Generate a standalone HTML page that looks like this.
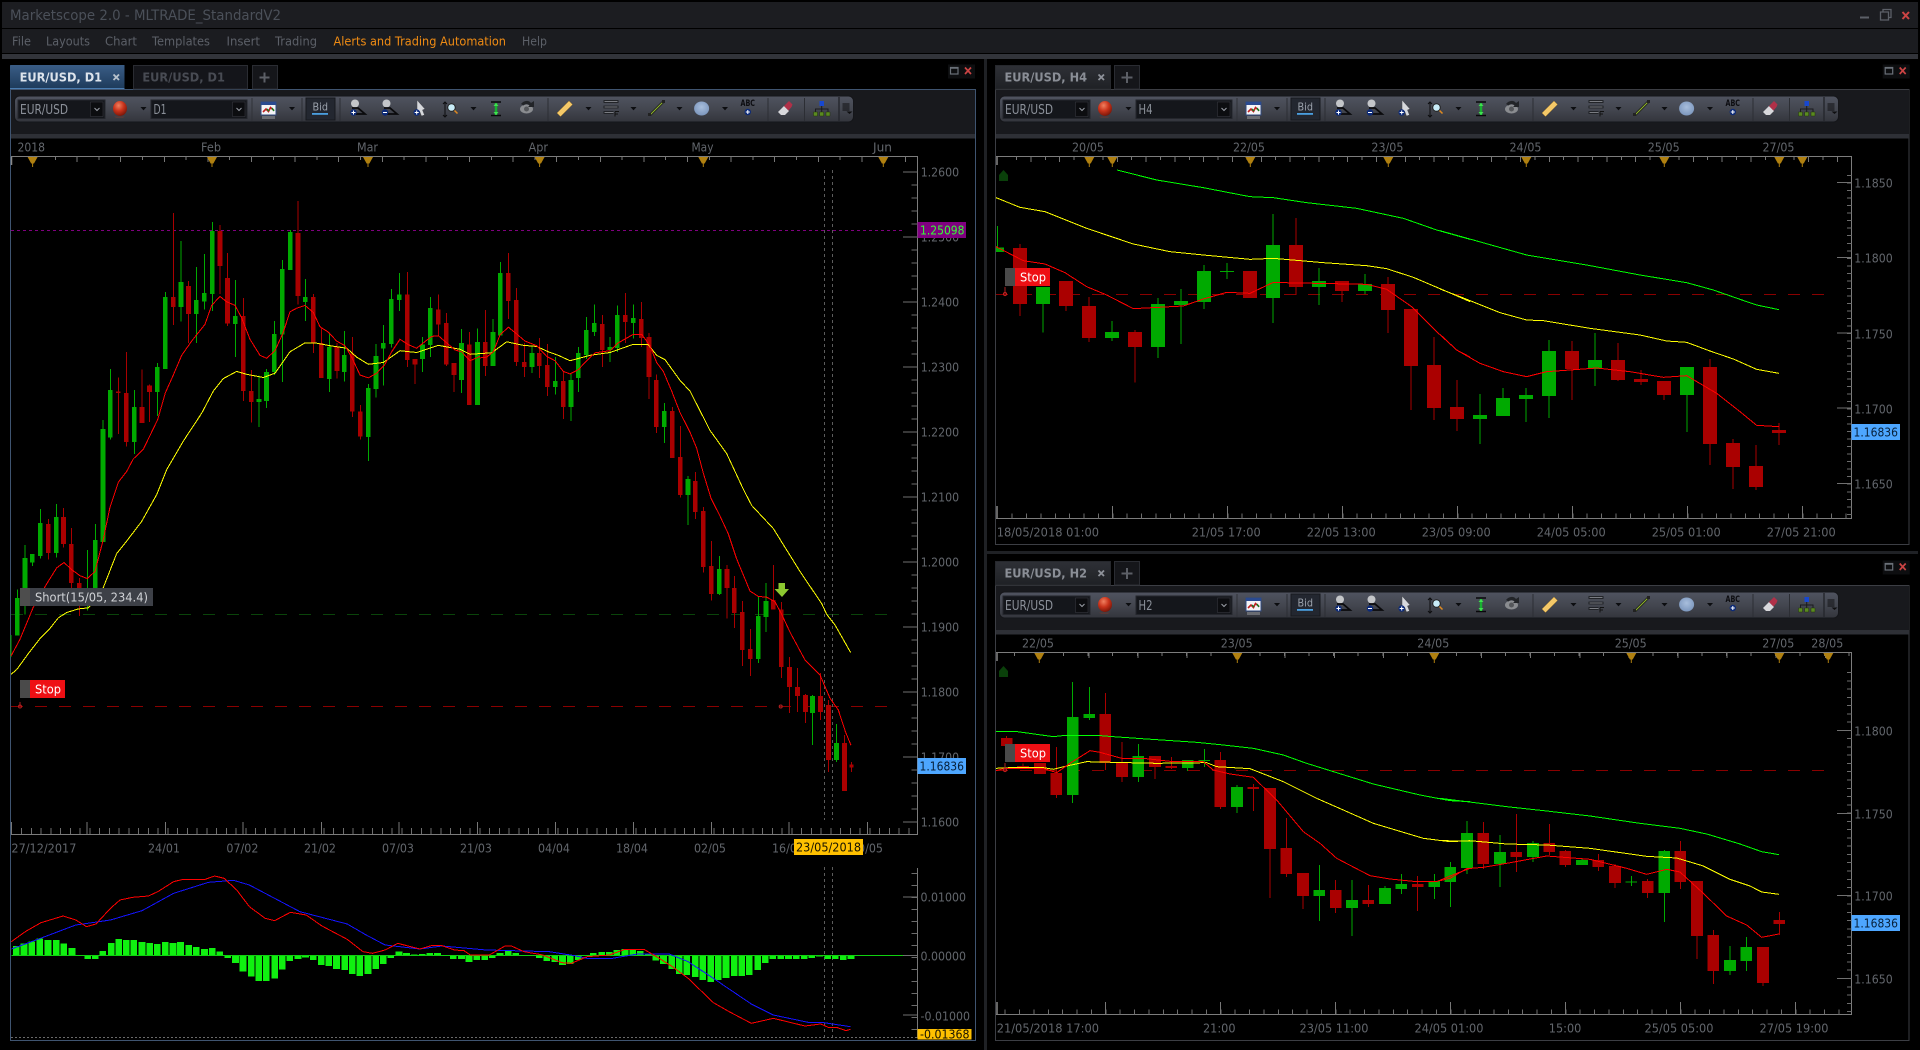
<!DOCTYPE html>
<html><head><meta charset="utf-8"><title>Marketscope 2.0</title>
<style>
html,body{margin:0;padding:0;background:#000;width:1920px;height:1050px;overflow:hidden}
svg{display:block}
text{font-family:"DejaVu Sans","Liberation Sans",sans-serif;font-size:12px;fill:#666a70}
.m{font-size:12px;fill:#5c6068}
.tb{font-size:13.5px;fill:#8b9099}
.ax{fill:#62666c}
.c{shape-rendering:crispEdges;fill:none}
.l{fill:none;vector-effect:non-scaling-stroke;stroke-width:1;shape-rendering:crispEdges}
</style></head><body>
<svg width="1920" height="1050" viewBox="0 0 1920 1050" xmlns="http://www.w3.org/2000/svg">
<defs>
<linearGradient id="tg" x1="0" y1="0" x2="0" y2="1"><stop offset="0" stop-color="#505460"/><stop offset=".55" stop-color="#42454e"/><stop offset="1" stop-color="#33353c"/></linearGradient>
<linearGradient id="ta" x1="0" y1="0" x2="0" y2="1"><stop offset="0" stop-color="#3a5d86"/><stop offset="1" stop-color="#1d3a5a"/></linearGradient>
<linearGradient id="ti" x1="0" y1="0" x2="0" y2="1"><stop offset="0" stop-color="#2e3036"/><stop offset="1" stop-color="#1f2125"/></linearGradient>
<radialGradient id="ball" cx=".4" cy=".3" r=".75"><stop offset="0" stop-color="#f08060"/><stop offset=".5" stop-color="#c8321a"/><stop offset="1" stop-color="#701408"/></radialGradient>
<radialGradient id="ell" cx=".5" cy=".4" r=".7"><stop offset="0" stop-color="#a8bedc"/><stop offset="1" stop-color="#7590b8"/></radialGradient>
<g id="pl"><circle r="3.2" fill="#0c2a78"/><path d="M-2 0H2M0-2V2" stroke="#fff" stroke-width="1"/></g>
<g id="tbar">
<rect x="14.5" y="96" width="839" height="26" rx="5" fill="url(#tg)" stroke="#15161a"/>
<rect x="18" y="100" width="87" height="18.5" fill="#14161b" stroke="#24262c"/>
<rect x="90.5" y="102" width="12.5" height="14.5" fill="#0c0d10" stroke="#3a3c44" stroke-width=".5"/>
<path d="M94.5 108l2.5 2.5 2.5-2.5" stroke="#9a9ea6" fill="none"/>
<ellipse cx="120" cy="108.500" rx="7" ry="7.500" fill="url(#ball)"/>
<path d="M114 116.500h11l-2 1.500h-7z" fill="#6a3a34" opacity=".6"/>
<path d="M140.5 107h6l-3 3.4z" fill="#0c0d10"/>
<rect x="151" y="100" width="96" height="18.5" fill="#14161b" stroke="#24262c"/>
<rect x="232.5" y="102" width="12.5" height="14.5" fill="#0c0d10" stroke="#3a3c44" stroke-width=".5"/>
<path d="M236.5 108l2.5 2.5 2.5-2.5" stroke="#9a9ea6" fill="none"/>
<path d="M252 98v23" stroke="#303238"/>
<rect x="261" y="102" width="15" height="13" fill="#f4f4f6" stroke="#304a80"/>
<rect x="261" y="102" width="15" height="3" fill="#2a4a90"/>
<path d="M263 112l3-3 2.5 2.5 2-4 3.5 3" stroke="#c02020" stroke-width="1.6" fill="none"/>
<path d="M267 109l2 2M272 108l2 3" stroke="#108020" stroke-width="1.4"/>
<rect x="262" y="116" width="13" height="3" fill="#6a6c72"/>
<path d="M289 107h6l-3 3.4z" fill="#0c0d10"/>
<path d="M302 98v23" stroke="#2c2e34"/>
<rect x="306" y="98" width="29" height="22" fill="#232730" stroke="#17191e"/>
<rect x="312" y="113" width="16" height="1.8" fill="#4a9fe0"/>
<path d="M340 98v23" stroke="#2c2e34"/>
<circle cx="355" cy="103.5" r="4" fill="#c4c6c9"/><path d="M352 108h6l7 6H355" stroke="#0a0a0c" stroke-width="1.8" fill="none"/><use href="#pl" x="353.5" y="112.5"/>
<circle cx="386.5" cy="103.5" r="4" fill="#c4c6c9"/><path d="M384 108h6l7 6H387" stroke="#0a0a0c" stroke-width="1.8" fill="none"/>
<circle cx="385" cy="112.5" r="3.2" fill="#0c2a78"/><path d="M383 112.5h4" stroke="#fff"/>
<path d="M417 100l8 9-2.500 1 2 5-3 1-2-5-2.500 2z" fill="#d6d8dc" stroke="#44464c" stroke-width=".5"/><use href="#pl" x="416.700" y="112.500"/>
<path d="M445 102v15M443 104l2-2 2 2M443 115l2 2 2-2" stroke="#0c0c0e" fill="none"/>
<circle cx="451.500" cy="107.500" r="3.800" fill="#c8ecf8" stroke="#222"/><path d="M454.500 110.500l3 3" stroke="#e08a20" stroke-width="1.500"/>
<path d="M470.500 107h6l-3 3.400z" fill="#0c0d10"/>
<path d="M491 102h10M491 115.500h10" stroke="#08080a" stroke-width="1.400"/><path d="M496 103v12" stroke="#18b030" stroke-width="2.500"/><path d="M493.500 106l2.500-3 2.500 3z M493.500 112l2.500 3 2.500-3z" fill="#40e050"/>
<ellipse cx="526.500" cy="109" rx="6.500" ry="4.500" fill="#8a8c90"/><circle cx="526.500" cy="109" r="2.500" fill="#55575b"/><path d="M521 104c3-4 8-4 10-1l3-2v6h-6l1.500-1.500c-2-2-4-2-6 0z" fill="#222428"/>
<path d="M548 98v23" stroke="#2c2e34"/>
<path d="M557 113l12-12 3.500 3.500-12 12z" fill="#f4c868" stroke="#a88030" stroke-width=".5"/>
<path d="M585.500 107h6l-3 3.400z" fill="#0c0d10"/>
<path d="M603.500 101.500h15M603.500 107h15M603.500 112.500h10" stroke="#1c1e22" stroke-width="2.800"/><path d="M604.500 101.500h13M604.500 107h13M604.500 112.500h9" stroke="#7a7c82" stroke-width="1"/><path d="M615 111.500h4M615 111.500v5M615 114h3" stroke="#111" fill="none"/>
<path d="M630.500 107h6l-3 3.400z" fill="#0c0d10"/>
<path d="M650 115l13-13" stroke="#111" stroke-width="2.600"/><path d="M650 115l13-13" stroke="#8cb030" stroke-width="1.200"/><path d="M648 113h3v3h-3zM662 100h3v3h-3z" fill="#222"/>
<path d="M676.500 107h6l-3 3.400z" fill="#0c0d10"/>
<ellipse cx="701.600" cy="108.500" rx="7.500" ry="7" fill="url(#ell)"/>
<path d="M722 107h6l-3 3.400z" fill="#0c0d10"/>
<use href="#pl" x="747.800" y="112"/>
<path d="M768 98v23" stroke="#2c2e34"/>
<path d="M778 112l6-6 5 5-4 4h-4z" fill="#d8d8dc"/><path d="M784 106l5-5 3.500 3.500-1 2.500-3 3.500z" fill="#b03048"/>
<path d="M804.500 98v23" stroke="#2c2e34"/>
<rect x="819.500" y="101" width="4.500" height="5" fill="#1848d0"/><path d="M821.700 106v3M815.500 112v-3h12.500v3M821.700 109v3" stroke="#1a1a1e" fill="none"/><path d="M813.500 112h4v4h-4zM819.700 112h4v4h-4zM826 112h4v4h-4z" fill="#5a8a20" stroke="#22340c" stroke-width=".5"/>
<path d="M839 97v24" stroke="#26282e" stroke-width="1.500"/>
<path d="M842.500 104h7M842.500 106h7M842.500 108h7M842.500 110h7" stroke="#0e0e10"/><path d="M846.500 111.500h6l-3 2.500z" fill="#0e0e10"/>
</g>
<g id="mk"><path d="M-5 1h10l-3.600 6.500-.9 0V11h-1V7.500h-.9z" fill="#b08010"/></g>
<g id="wc"><rect x="-6" y="-6.500" width="27" height="14" fill="#0d0e10"/><rect x="-3.500" y="-3.500" width="7.500" height="6.500" fill="none" stroke="#6a7078" stroke-width="1.200"/><path d="M-3.500-3h7.500" stroke="#6a7078" stroke-width="1.500"/><path d="M11-3.500l6 6.500m0-6.500l-6 6.500" stroke="#cc4444" stroke-width="1.700"/></g>
<g id="stopb"><rect width="10" height="18" fill="#4a4a4a"/><rect x="10" width="35" height="18" fill="#ee0f14"/></g>
</defs>

<rect width="1920" height="1050" fill="#000"/>
<!-- title + menu -->
<rect x="2" y="2" width="1916" height="26" fill="#1c1d21"/>
<rect x="2" y="29" width="1916" height="24" fill="#1b1c20"/>
<rect x="2" y="54" width="1916" height="5" fill="#32343a"/>
<text x="10" y="20" style="font-size:14px;fill:#4b5059" textLength="271" lengthAdjust="spacingAndGlyphs">Marketscope 2.0 - MLTRADE_StandardV2</text>
<text class="m" x="12" y="45.500" textLength="19" lengthAdjust="spacingAndGlyphs">File</text>
<text class="m" x="46" y="45.500" textLength="44" lengthAdjust="spacingAndGlyphs">Layouts</text>
<text class="m" x="105" y="45.500" textLength="32" lengthAdjust="spacingAndGlyphs">Chart</text>
<text class="m" x="152" y="45.500" textLength="58" lengthAdjust="spacingAndGlyphs">Templates</text>
<text class="m" x="226.500" y="45.500" textLength="33.500" lengthAdjust="spacingAndGlyphs">Insert</text>
<text class="m" x="275" y="45.500" textLength="42" lengthAdjust="spacingAndGlyphs">Trading</text>
<text x="333.500" y="45.500" style="fill:#f08c14" textLength="172.500" lengthAdjust="spacingAndGlyphs">Alerts and Trading Automation</text>
<text class="m" x="522" y="45.500" textLength="25" lengthAdjust="spacingAndGlyphs">Help</text>
<path d="M1860 17.500h9" stroke="#5c6068" stroke-width="2"/>
<path d="M1880.500 12h8v8h-8zM1883 12V9.500h8v8h-2.500" stroke="#5c6068" stroke-width="1.300" fill="none"/>
<path d="M1902.500 12l6.500 7m0-7l-6.500 7" stroke="#cc4444" stroke-width="2"/>

<!-- splitters -->
<rect x="984" y="59" width="3" height="991" fill="#1f2125"/>
<rect x="987" y="551" width="931" height="3" fill="#1f2125"/>

<!-- LEFT PANEL -->
<rect x="10.500" y="89.500" width="965" height="951" fill="#000" stroke="#3f5470"/>
<rect x="11" y="90" width="964" height="44" fill="#18191d"/>
<rect x="11" y="134" width="964" height="4.500" fill="#2e3036"/>
<path d="M10 89V65.500q0-.5 1-.5H124.500V89z" fill="url(#ta)"/>
<path d="M10 88.500H124.500" stroke="#4a7cb0"/>
<text x="19.600" y="81.500" style="font-weight:bold;font-size:12px;fill:#dde4ec" textLength="82.500" lengthAdjust="spacingAndGlyphs">EUR/USD, D1</text>
<path d="M113.500 74.500l5.500 5.500m0-5.500l-5.500 5.500" stroke="#b8c2cc" stroke-width="1.800"/>
<rect x="133.500" y="65.500" width="114" height="23.500" fill="#14151a" stroke="#2a2c32"/>
<text x="142.400" y="81.500" style="font-weight:bold;font-size:12px;fill:#484b53" textLength="82.500" lengthAdjust="spacingAndGlyphs">EUR/USD, D1</text>
<rect x="252.500" y="65.500" width="25" height="23.500" fill="#15161a" stroke="#2a2c32"/>
<path d="M259.500 77.500h10M264.500 72.500v10" stroke="#5c5f66" stroke-width="2"/>
<use href="#wc" x="954" y="71"/>

<use href="#tbar"/>
<text class="tb" x="20" y="114" textLength="48" lengthAdjust="spacingAndGlyphs">EUR/USD</text>
<text class="tb" x="153.500" y="114" textLength="13" lengthAdjust="spacingAndGlyphs">D1</text>
<text x="312.500" y="110.500" style="font-size:11px;fill:#9ba2ac" textLength="15.500" lengthAdjust="spacingAndGlyphs">Bid</text>
<text x="740.500" y="106" style="font-size:8.500px;fill:#0c0c10;font-weight:bold" textLength="14.500" lengthAdjust="spacingAndGlyphs">ABC</text>

<!-- left top axis -->
<path d="M11 156.500H917.500V834.500H11" stroke="#7c7c7c" fill="none"/>
<path class="c" d="M33 158H917" stroke="#777" stroke-width="4" stroke-dasharray="1 20.800"/>
<path class="c" d="M76.600 159H917" stroke="#777" stroke-width="6" stroke-dasharray="1 42.600"/>
<path d="M11.500 157v8" stroke="#888" stroke-width="1.500"/>
<use href="#mk" x="32.600" y="156"/><use href="#mk" x="212" y="156"/><use href="#mk" x="368" y="156"/><use href="#mk" x="539.600" y="156"/><use href="#mk" x="703.300" y="156"/><use href="#mk" x="883.300" y="156"/>
<text class="ax" x="17.500" y="151.500" textLength="27.500" lengthAdjust="spacingAndGlyphs">2018</text>
<text class="ax" x="201" y="151.500" textLength="20" lengthAdjust="spacingAndGlyphs">Feb</text>
<text class="ax" x="357" y="151.500" textLength="21" lengthAdjust="spacingAndGlyphs">Mar</text>
<text class="ax" x="528.500" y="151.500" textLength="19.500" lengthAdjust="spacingAndGlyphs">Apr</text>
<text class="ax" x="691.500" y="151.500" textLength="22" lengthAdjust="spacingAndGlyphs">May</text>
<text class="ax" x="873" y="151.500" textLength="19" lengthAdjust="spacingAndGlyphs">Jun</text>
<!-- left y axis -->
<path class="c" d="M914.500 171.500V834" stroke="#6c6c6c" stroke-width="6" stroke-dasharray="1 12"/>
<path d="M903 172h14M903 237h14M903 302h14M903 367h14M903 432h14M903 497h14M903 562h14M903 627h14M903 692h14M903 757h14M903 822h14" stroke="#707070"/>
<text class="ax" x="920.700" y="176.500" textLength="38.400" lengthAdjust="spacingAndGlyphs">1.2600</text>
<text class="ax" x="920.700" y="241.500" textLength="38.400" lengthAdjust="spacingAndGlyphs">1.2500</text>
<text class="ax" x="920.700" y="306.500" textLength="38.400" lengthAdjust="spacingAndGlyphs">1.2400</text>
<text class="ax" x="920.700" y="371.500" textLength="38.400" lengthAdjust="spacingAndGlyphs">1.2300</text>
<text class="ax" x="920.700" y="436.500" textLength="38.400" lengthAdjust="spacingAndGlyphs">1.2200</text>
<text class="ax" x="920.700" y="501.500" textLength="38.400" lengthAdjust="spacingAndGlyphs">1.2100</text>
<text class="ax" x="920.700" y="566.500" textLength="38.400" lengthAdjust="spacingAndGlyphs">1.2000</text>
<text class="ax" x="920.700" y="631.500" textLength="38.400" lengthAdjust="spacingAndGlyphs">1.1900</text>
<text class="ax" x="920.700" y="696.500" textLength="38.400" lengthAdjust="spacingAndGlyphs">1.1800</text>
<text class="ax" x="920.700" y="761.500" textLength="38.400" lengthAdjust="spacingAndGlyphs">1.1700</text>
<text class="ax" x="920.700" y="826.500" textLength="38.400" lengthAdjust="spacingAndGlyphs">1.1600</text>
<!-- left bottom axis -->
<path class="c" d="M21.100 831H917" stroke="#6e6e6e" stroke-width="6" stroke-dasharray="1 8.750"/>
<path d="M11.500 822v12M87 822v12M165.500 822v12M243 822v12M321.500 822v12M399 822v12M477.500 822v12M555.500 822v12M633.500 822v12M711.500 822v12M789 822v12M867.500 822v12" stroke="#777"/>
<text class="ax" x="11.400" y="852.500" textLength="65" lengthAdjust="spacingAndGlyphs">27/12/2017</text>
<text class="ax" x="148" y="852.500" textLength="32" lengthAdjust="spacingAndGlyphs">24/01</text>
<text class="ax" x="226.400" y="852.500" textLength="32" lengthAdjust="spacingAndGlyphs">07/02</text>
<text class="ax" x="304" y="852.500" textLength="32" lengthAdjust="spacingAndGlyphs">21/02</text>
<text class="ax" x="382" y="852.500" textLength="32" lengthAdjust="spacingAndGlyphs">07/03</text>
<text class="ax" x="460" y="852.500" textLength="32" lengthAdjust="spacingAndGlyphs">21/03</text>
<text class="ax" x="538" y="852.500" textLength="32" lengthAdjust="spacingAndGlyphs">04/04</text>
<text class="ax" x="616" y="852.500" textLength="32" lengthAdjust="spacingAndGlyphs">18/04</text>
<text class="ax" x="694" y="852.500" textLength="32" lengthAdjust="spacingAndGlyphs">02/05</text>
<text class="ax" x="772" y="852.500" textLength="32" lengthAdjust="spacingAndGlyphs">16/05</text>
<text class="ax" x="851" y="852.500" textLength="32" lengthAdjust="spacingAndGlyphs">30/05</text>
<rect x="794" y="839" width="69" height="16" fill="#ffc000"/>
<text x="796" y="851.500" style="fill:#1a1400" textLength="65" lengthAdjust="spacingAndGlyphs">23/05/2018</text>

<!-- left hlines -->
<path d="M11 230.500H903" stroke="#800080" stroke-dasharray="3 3"/>
<path d="M11 614.500H897" stroke="#0a440a" stroke-dasharray="12 12"/>
<path d="M11 706.500H897" stroke="#8a0000" stroke-dasharray="12 12"/>
<path d="M824.500 170V820M832.500 170V820M824.500 867V1038M832.500 867V1038" stroke="#5c5c5c" stroke-dasharray="3 3"/>
<path d="M20 706v-4" stroke="#aa2020"/><circle cx="20" cy="706.500" r="1.500" fill="none" stroke="#b02020"/><circle cx="780.700" cy="706.500" r="1.500" fill="none" stroke="#b02020"/>

<!-- left candles A -->
<g transform="translate(0 150) scale(.33333 .35714)">
<path class="c" stroke="#00aa00" stroke-width="3" d="M33 1358V1420M52 1230V1360M75 1106V1300M97 1131V1165M121 1005V1144M169 991V1141M262 1120V1290M286 1047V1226M309 756V1098M331 613V810M403 672V851M472 597V745M496 398V613M543 255V480M589 328V540M613 291V447M637 202V451M706 364V580M777 632V776M800 613V722M823 479V630M847 308V650M871 224V336M916 361V479M988 511V678M1033 507V648M1105 655V871M1128 543V693M1150 490V660M1174 389V553M1198 344V451M1268 524V622M1291 412V580M1385 501V680M1433 500V714"/>
<path class="c" stroke="#00aa00" stroke-width="14.500" d="M52 1254V1360M75 1142V1226M97 1131V1155M121 1044V1137M169 1028V1128M286 1092V1226M309 781V1098M331 672V805M403 720V818M472 608V678M496 412V613M543 370V440M589 420V459M613 400V424M637 227V403M706 465V487M777 697V706M800 622V703M823 515V622M847 333V517M871 230V336M916 412V426M988 551V641M1033 574V622M1105 666V804M1128 577V669M1150 540V556M1174 417V543M1198 404V420M1268 544V585M1291 442V546M1385 540V644M1433 538V714"/>
<path class="c" stroke="#aa0000" stroke-width="3" d="M145 1033V1147M191 1002V1113M214 1058V1226M238 1198V1305M355 637V795M379 566V830M426 615V764M449 657V762M520 176V490M566 367V540M660 210V403M683 289V493M730 414V703M754 616V763M894 143V433M940 403V568M964 499V638M1011 540V640M1057 524V748M1081 714V810M1222 342V607M1245 585V655M1315 404V519M1339 456V605M1362 597V677M1408 510V714"/>
<path class="c" stroke="#aa0000" stroke-width="14.500" d="M145 1047V1128M191 1028V1103M214 1103V1212M238 1212V1226M355 676V680M379 680V818M426 720V764M449 660V678M520 412V440M566 381V459M660 227V325M683 358V486M730 465V675M754 675V706M894 232V409M940 412V540M964 540V638M1011 552V619M1057 570V732M1081 732V802M1222 404V588M1245 585V601M1315 446V488M1339 484V600M1362 597V630M1408 544V714"/>
</g>
<!-- left candles B -->
<g transform="translate(480 150) scale(.33333 .35714)">
<path class="c" stroke="#00aa00" stroke-width="3" d="M39 473V605M61 314V520M156 550V624M226 580V684M273 627V759M295 552V678M319 468V585M343 432V521M390 524V594M412 436V565M460 432V528M553 708V820M624 913V1050M718 1137V1246M835 1249V1436M858 1212V1350"/>
<path class="c" stroke="#00aa00" stroke-width="14.500" d="M39 510V605M61 344V520M156 568V608M226 647V664M273 644V720M295 568V638M319 504V574M343 484V510M390 552V560M412 462V554M460 470V484M553 731V776M624 921V966M718 1173V1243M835 1305V1425M858 1263V1308"/>
<path class="c" stroke="#aa0000" stroke-width="3" d="M16 448V633M85 288V473M109 386V605M133 540V636M178 526V639M202 543V689M250 622V753M367 462V608M436 400V540M484 426V552M507 512V697M529 628V792M577 720V862M601 773V973M646 902V1033M670 1000V1183M694 1095V1262M741 1162V1312M763 1193V1338M787 1263V1445M811 1341V1473M880 1162V1287M904 1266V1478"/>
<path class="c" stroke="#aa0000" stroke-width="14.500" d="M16 538V605M85 344V423M109 420V594M133 594V608M178 568V605M202 602V664M250 647V720M367 487V560M436 462V482M484 473V526M507 524V636M529 644V776M577 731V862M601 860V966M646 927V1014M670 1011V1168M694 1165V1243M741 1173V1226M763 1226V1296M787 1294V1400M811 1397V1425M880 1260V1287M904 1286V1448"/>
</g>
<!-- left candles tail real coords -->
<path class="c" stroke="#aa0000" d="M789.500 657V713M797.500 668V712M805.500 694V723M820.500 673V720M828.500 700V772M844.500 735V791M851.500 762V772"/>
<path class="c" stroke="#00aa00" d="M812.500 695V745M836.500 724V762"/>
<path class="c" stroke="#aa0000" stroke-width="5" d="M789.500 667V687M797.500 687V696M805.500 695V712M820.500 696V712M828.500 705V760M844.500 743V791"/>
<path class="c" stroke="#aa0000" stroke-width="4" d="M851.500 764.500V767.500"/>
<path class="c" stroke="#00aa00" stroke-width="5" d="M812.500 696V713M836.500 743V760"/>
<!-- left MAs -->
<g transform="translate(0 150) scale(.33333 .35714)">
<polyline class="l" stroke="#ffff00" points="33,1468 50,1455 85,1410 120,1368 145,1345 175,1310 200,1295 235,1285 265,1282 285,1260 310,1225 350,1130 380,1095 425,1040 470,965 500,895 550,815 605,737 640,675 670,640 710,620 740,628 790,637 825,625 870,565 915,540 945,540 990,548 1040,555 1070,580 1105,600 1150,595 1200,562 1250,567 1315,547 1380,558 1410,572 1440,570"/>
<polyline class="l" stroke="#ff0000" points="33,1417 60,1370 100,1280 140,1215 170,1170 192,1155 215,1175 240,1192 262,1200 285,1180 310,1090 330,1000 355,930 380,900 400,865 430,838 473,755 496,680 520,630 545,575 575,535 615,488 635,435 660,410 680,425 705,435 725,470 750,530 780,575 800,583 825,562 850,510 870,453 890,443 915,435 940,455 960,495 985,510 1010,535 1035,548 1055,580 1080,630 1105,638 1130,625 1155,600 1175,565 1200,530 1225,545 1250,555 1270,540 1295,522 1315,520 1340,540 1365,560 1385,565 1410,590 1440,578"/>
</g>
<g transform="translate(480 150) scale(.33333 .35714)">
<polyline class="l" stroke="#ffff00" points="0,570 35,568 80,537 130,547 170,550 205,565 235,575 270,590 330,575 390,567 460,544 505,545 530,575 555,587 600,645 630,675 690,785 740,850 790,950 815,995 880,1060 960,1180 1025,1270 1040,1300 1065,1330 1112,1407"/>
<polyline class="l" stroke="#ff0000" points="0,582 20,580 40,565 60,518 85,496 110,515 135,535 170,548 200,578 225,590 250,620 270,627 295,615 320,590 345,568 390,562 415,540 460,516 485,516 510,548 530,595 550,620 575,675 600,735 630,790 650,835 670,905 693,975 720,1025 745,1075 770,1145 810,1235 835,1250 860,1252 885,1265 905,1300 930,1350 975,1428 1020,1470 1050,1535 1075,1568 1096,1628 1113,1667"/>
</g>
<!-- green arrow -->
<path d="M778.500 583h6.500v6h4l-7 8-7.500-8h4z" fill="#8cc830"/>

<!-- left labels -->
<rect x="917.500" y="222" width="48.500" height="16" fill="#800080"/>
<text x="920" y="234.500" style="fill:#33ff33" textLength="44.500" lengthAdjust="spacingAndGlyphs">1.25098</text>
<rect x="917.500" y="758" width="48.500" height="16" fill="#4da6ff"/>
<text x="919.500" y="770.500" style="fill:#07203a" textLength="44.500" lengthAdjust="spacingAndGlyphs">1.16836</text>
<rect x="20" y="588" width="133" height="18" fill="#3d4047"/><rect x="20" y="588" width="10" height="18" fill="#4d4d4d"/>
<text x="35" y="601.500" style="fill:#d0d2d6" textLength="113" lengthAdjust="spacingAndGlyphs">Short(15/05, 234.4)</text>
<use href="#stopb" x="20" y="680"/>
<text x="35" y="693.500" style="fill:#fff" textLength="26" lengthAdjust="spacingAndGlyphs">Stop</text>

<!-- MACD -->
<g transform="translate(0 700) scale(.63131 .33333)">
<path class="c" stroke="#10f010" stroke-width="10.500" d="M26 766V738M38 766V730M50 766V725M63 766V716M76 766V720M89 766V720M101 766V730M114 766V744M139 766V777M151 766V777M163 766V753M176 766V729M188 766V717M200 766V720M212 766V720M225 766V726M237 766V729M249 766V732M262 766V726M274 766V729M286 766V726M299 766V735M311 766V741M324 766V747M336 766V744M348 766V754M361 766V774M373 766V789M385 766V814M398 766V830M410 766V843M422 766V843M435 766V836M447 766V809M459 766V783M472 766V777M484 766V772M496 766V780M509 766V795M521 766V798M533 766V807M546 766V810M558 766V822M570 766V828M583 766V822M595 766V807M607 766V792M619 766V774M632 766V755M644 766V759M656 766V763M669 766V762M681 766V759M693 766V759M718 766V777M731 766V777M743 766V786M755 766V780M768 766V780M780 766V774M792 766V759M805 766V750M817 766V759M854 766V774M866 766V783M879 766V786M891 766V795M903 766V792M916 766V780M940 766V759M953 766V756M965 766V756M977 766V750M990 766V747M1002 766V750M1014 766V753M1027 766V763M1039 766V782M1051 766V792M1064 766V807M1076 766V822M1088 766V825M1101 766V831M1113 766V840M1126 766V846M1138 766V840M1150 766V834M1163 766V828M1175 766V828M1187 766V825M1200 766V810M1212 766V789M1224 766V777M1237 766V777M1249 766V777M1261 766V777M1274 766V777M1286 766V774M1298 766V769M1311 766V777M1323 766V777M1336 766V780M1348 766V777"/>
<path class="c" stroke="#10d010" stroke-width="3" d="M18 766H1430"/>
<polyline class="l" stroke="#1414ff" points="18,747 50,725 120,675 175,660 225,632 275,580 330,547 370,541 395,555 440,600 475,635 550,672 580,705 610,735 665,747 700,738 770,750 870,755 910,767 930,775 970,775 1010,762 1060,762 1090,785 1130,835 1190,912 1225,945 1280,967 1305,968 1347,980"/>
<polyline class="l" stroke="#ff0000" points="18,725 40,695 65,668 100,648 120,660 137,680 152,672 175,625 190,600 210,592 235,588 250,575 275,545 290,538 325,538 340,528 355,535 375,570 395,620 420,655 435,662 460,637 485,645 510,678 550,718 575,755 590,760 610,750 630,730 665,747 685,736 700,737 720,750 735,752 745,765 775,765 800,738 810,738 830,755 860,765 890,788 905,790 930,770 965,765 990,748 1020,748 1040,770 1065,800 1090,835 1130,908 1155,935 1190,970 1225,955 1275,978 1300,972 1312,982 1325,982 1340,992 1347,988"/>
</g>
<path d="M917.500 868V1038" stroke="#777"/>
<path class="c" d="M914.500 873V1038" stroke="#6c6c6c" stroke-width="6" stroke-dasharray="1 11"/>
<path d="M903 897h14M903 955.500h14M903 1015h14" stroke="#707070"/>
<text class="ax" x="920.500" y="901.500" textLength="45.500" lengthAdjust="spacingAndGlyphs">0.01000</text>
<text class="ax" x="920.500" y="960.500" textLength="45.500" lengthAdjust="spacingAndGlyphs">0.00000</text>
<text class="ax" x="920.500" y="1020.500" textLength="49.500" lengthAdjust="spacingAndGlyphs">-0.01000</text>
<path d="M11 1037.500H917" stroke="#6a6a6a" stroke-dasharray="2 2"/>
<rect x="917.500" y="1029" width="54" height="10.500" fill="#ffc000"/>
<text x="920" y="1038.500" style="fill:#1a1400" textLength="49.500" lengthAdjust="spacingAndGlyphs">-0.01368</text>

<!-- RIGHT TOP PANEL H4 -->
<rect x="995.500" y="89.500" width="913.500" height="455" fill="#000" stroke="#3c3e44"/>
<rect x="996" y="90" width="913" height="44" fill="#18191d"/>
<rect x="996" y="134" width="913" height="4.500" fill="#2e3036"/>
<path d="M995.500 89V65.500H1110.500V89z" fill="url(#ti)" stroke="#26282d"/>
<text x="1004.500" y="81.500" style="font-weight:bold;font-size:12px;fill:#8a8e96" textLength="82.500" lengthAdjust="spacingAndGlyphs">EUR/USD, H4</text>
<path d="M1098.500 74.500l5.500 5.500m0-5.500l-5.500 5.500" stroke="#8e929a" stroke-width="1.800"/>
<rect x="1114.500" y="65.500" width="25" height="23.500" fill="#15161a" stroke="#2a2c32"/>
<path d="M1121.500 77.500h11M1127 72v11" stroke="#5c5f66" stroke-width="2"/>
<use href="#wc" x="1888.700" y="71"/>
<use href="#tbar" x="985"/>
<text class="tb" x="1005" y="114" textLength="48" lengthAdjust="spacingAndGlyphs">EUR/USD</text>
<text class="tb" x="1138.500" y="114" textLength="14" lengthAdjust="spacingAndGlyphs">H4</text>
<text x="1297.500" y="110.500" style="font-size:11px;fill:#9ba2ac" textLength="15.500" lengthAdjust="spacingAndGlyphs">Bid</text>
<text x="1725.500" y="106" style="font-size:8.500px;fill:#0c0c10;font-weight:bold" textLength="14.500" lengthAdjust="spacingAndGlyphs">ABC</text>

<path d="M996 156.500H1851.500V518.500H996" stroke="#7c7c7c" fill="none"/>
<path class="c" d="M1016 158H1851" stroke="#777" stroke-width="4" stroke-dasharray="1 13.400"/>
<path class="c" d="M1030.400 159H1851" stroke="#777" stroke-width="6" stroke-dasharray="1 27.800"/>
<path d="M997 157v8M997 506v12" stroke="#888" stroke-width="1.500"/>
<use href="#mk" x="1089.300" y="156"/><use href="#mk" x="1112.300" y="156"/><use href="#mk" x="1250.300" y="156"/><use href="#mk" x="1388.300" y="156"/><use href="#mk" x="1526.300" y="156"/><use href="#mk" x="1664.300" y="156"/><use href="#mk" x="1779.300" y="156"/><use href="#mk" x="1802.300" y="156"/>
<text class="ax" x="1072" y="151.500" textLength="32" lengthAdjust="spacingAndGlyphs">20/05</text>
<text class="ax" x="1233" y="151.500" textLength="32" lengthAdjust="spacingAndGlyphs">22/05</text>
<text class="ax" x="1371.400" y="151.500" textLength="32" lengthAdjust="spacingAndGlyphs">23/05</text>
<text class="ax" x="1509.500" y="151.500" textLength="32" lengthAdjust="spacingAndGlyphs">24/05</text>
<text class="ax" x="1647.700" y="151.500" textLength="32" lengthAdjust="spacingAndGlyphs">25/05</text>
<text class="ax" x="1762.500" y="151.500" textLength="32" lengthAdjust="spacingAndGlyphs">27/05</text>
<path class="c" d="M1849.500 175V518" stroke="#6c6c6c" stroke-width="5" stroke-dasharray="1 6.530"/>
<path d="M1837 182.500h14M1837 257.500h14M1837 333h14M1837 408h14M1837 483.500h14" stroke="#707070"/>
<text class="ax" x="1854.300" y="187.500" textLength="38.400" lengthAdjust="spacingAndGlyphs">1.1850</text>
<text class="ax" x="1854.300" y="262.500" textLength="38.400" lengthAdjust="spacingAndGlyphs">1.1800</text>
<text class="ax" x="1854.300" y="338.500" textLength="38.400" lengthAdjust="spacingAndGlyphs">1.1750</text>
<text class="ax" x="1854.300" y="413.500" textLength="38.400" lengthAdjust="spacingAndGlyphs">1.1700</text>
<text class="ax" x="1854.300" y="488.500" textLength="38.400" lengthAdjust="spacingAndGlyphs">1.1650</text>
<path class="c" d="M1011.700 516H1851" stroke="#6e6e6e" stroke-width="5" stroke-dasharray="1 13.375"/>
<path d="M1112.500 506v12M1227.500 506v12M1342.500 506v12M1457.500 506v12M1572.500 506v12M1687.500 506v12M1802.500 506v12" stroke="#777"/>
<text class="ax" x="996.700" y="536.500" textLength="102.300" lengthAdjust="spacingAndGlyphs">18/05/2018 01:00</text>
<text class="ax" x="1191.700" y="536.500" textLength="69" lengthAdjust="spacingAndGlyphs">21/05 17:00</text>
<text class="ax" x="1306.700" y="536.500" textLength="69" lengthAdjust="spacingAndGlyphs">22/05 13:00</text>
<text class="ax" x="1421.700" y="536.500" textLength="69" lengthAdjust="spacingAndGlyphs">23/05 09:00</text>
<text class="ax" x="1536.700" y="536.500" textLength="69" lengthAdjust="spacingAndGlyphs">24/05 05:00</text>
<text class="ax" x="1651.700" y="536.500" textLength="69" lengthAdjust="spacingAndGlyphs">25/05 01:00</text>
<text class="ax" x="1766.700" y="536.500" textLength="69" lengthAdjust="spacingAndGlyphs">27/05 21:00</text>
<path d="M999 181v-6l4.500-5 4.500 5v6z" fill="#0a400a"/>
<path d="M996 294.500H1832" stroke="#8a0000" stroke-dasharray="12 12"/>

<g transform="translate(990 150) scale(.33333)">
<path class="c" stroke="#00aa00" stroke-width="3" d="M22 228V306M159 411V548M366 513V573M504 444V624M573 417V582M642 345V477M711 339V387M849 192V519M987 354V465M1125 372V432"/>
<path class="c" stroke="#00aa00" stroke-width="3" d="M690 364H732"/>
<path class="c" stroke="#00aa00" stroke-width="42" d="M159 411V462M366 546V564M504 462V591M573 453V465M642 363V456M849 285V444M987 393V411M1125 402V423"/>
<path class="c" stroke="#00aa00" stroke-width="24" d="M30 292V306"/>
<path class="c" stroke="#aa0000" stroke-width="3" d="M90 282V498M228 393V483M297 441V576M435 540V698M780 363V444M918 204V435M1056 393V456M1194 381V549M1263 477V780M1332 561V810M1401 690V843"/>
<path class="c" stroke="#aa0000" stroke-width="42" d="M90 294V462M228 393V468M297 468V564M435 546V591M780 363V444M918 285V411M1056 393V423M1194 402V480M1263 477V648M1332 645V774M1401 771V807"/>
<polyline class="l" stroke="#00ff00" points="381,60 500,90 640,113 780,140 850,143 950,158 1100,175 1240,205 1340,240 1440,268"/>
<polyline class="l" stroke="#ffff00" points="18,143 90,172 165,185 290,235 430,282 540,305 640,315 780,328 850,325 1000,338 1130,347 1190,356 1270,382 1390,433 1440,455"/>
<polyline class="l" stroke="#ff0000" points="18,290 100,332 165,342 225,368 290,410 350,435 430,476 580,468 640,447 710,427 780,430 850,397 880,398 1130,403 1190,418 1265,470 1340,545 1400,600 1440,621"/>
</g>
<g transform="translate(1440 150) scale(.33333)">
<path class="c" stroke="#00aa00" stroke-width="3" d="M120 732V882M189 714V798M258 714V816M327 570V804M465 549V708M741 651V846"/>
<path class="c" stroke="#00aa00" stroke-width="42" d="M120 795V807M189 744V798M258 735V747M327 603V738M465 630V657M741 651V735"/>
<path class="c" stroke="#aa0000" stroke-width="3" d="M396 573V750M534 579V693M603 660V705M672 693V750M810 627V945M879 867V1017M948 885V1020M1017 819V885"/>
<path class="c" stroke="#aa0000" stroke-width="42" d="M396 603V657M534 630V690M603 687V696M672 693V735M810 651V882M879 879V951M948 948V1011M1017 840V849"/>
<polyline class="l" stroke="#00ff00" points="0,242 100,270 260,315 440,345 600,375 740,398 820,420 900,448 950,465 1017,479"/>
<polyline class="l" stroke="#ffff00" points="0,417 60,440 180,488 260,510 310,512 450,535 600,555 680,573 740,577 810,603 880,627 950,658 1017,670"/>
<polyline class="l" stroke="#ff0000" points="0,553 50,600 120,640 190,665 260,680 320,665 390,660 470,654 570,665 670,682 740,677 830,730 900,785 950,826 1017,830"/>
</g>
<path d="M1005 287v7" stroke="#aa2020"/><circle cx="1005" cy="294" r="1.600" fill="none" stroke="#c02020"/>
<use href="#stopb" x="1005" y="268"/>
<text x="1020" y="281.500" style="fill:#fff" textLength="26" lengthAdjust="spacingAndGlyphs">Stop</text>
<rect x="1851.500" y="424" width="48.500" height="16" fill="#4da6ff"/>
<text x="1853.500" y="436.500" style="fill:#07203a" textLength="44.500" lengthAdjust="spacingAndGlyphs">1.16836</text>

<!-- RIGHT BOTTOM PANEL H2 -->
<rect x="995.500" y="585.500" width="913.500" height="455" fill="#000" stroke="#3c3e44"/>
<rect x="996" y="586" width="913" height="44" fill="#18191d"/>
<rect x="996" y="630" width="913" height="4.500" fill="#2e3036"/>
<path d="M995.500 585V561.500H1110.500V585z" fill="url(#ti)" stroke="#26282d"/>
<text x="1004.500" y="577.500" style="font-weight:bold;font-size:12px;fill:#8a8e96" textLength="82.500" lengthAdjust="spacingAndGlyphs">EUR/USD, H2</text>
<path d="M1098.500 570.500l5.500 5.500m0-5.500l-5.500 5.500" stroke="#8e929a" stroke-width="1.800"/>
<rect x="1114.500" y="561.500" width="25" height="23.500" fill="#15161a" stroke="#2a2c32"/>
<path d="M1121.500 573.500h11M1127 568v11" stroke="#5c5f66" stroke-width="2"/>
<use href="#wc" x="1888.700" y="567"/>
<use href="#tbar" x="985" y="496"/>
<text class="tb" x="1005" y="610" textLength="48" lengthAdjust="spacingAndGlyphs">EUR/USD</text>
<text class="tb" x="1138.500" y="610" textLength="14" lengthAdjust="spacingAndGlyphs">H2</text>
<text x="1297.500" y="606.500" style="font-size:11px;fill:#9ba2ac" textLength="15.500" lengthAdjust="spacingAndGlyphs">Bid</text>
<text x="1725.500" y="602" style="font-size:8.500px;fill:#0c0c10;font-weight:bold" textLength="14.500" lengthAdjust="spacingAndGlyphs">ABC</text>

<path d="M996 652.500H1851.500V1014.500H996" stroke="#7c7c7c" fill="none"/>
<path class="c" d="M1014 654H1851" stroke="#777" stroke-width="4" stroke-dasharray="1 23.550"/>
<path class="c" d="M1088.300 655H1851" stroke="#777" stroke-width="6" stroke-dasharray="1 48.100"/>
<path d="M997 653v8M997 1002v12" stroke="#888" stroke-width="1.500"/>
<use href="#mk" x="1039.300" y="652"/><use href="#mk" x="1237.300" y="652"/><use href="#mk" x="1434.300" y="652"/><use href="#mk" x="1631.300" y="652"/><use href="#mk" x="1779.300" y="652"/><use href="#mk" x="1828.300" y="652"/>
<text class="ax" x="1022" y="647.500" textLength="32" lengthAdjust="spacingAndGlyphs">22/05</text>
<text class="ax" x="1220.700" y="647.500" textLength="32" lengthAdjust="spacingAndGlyphs">23/05</text>
<text class="ax" x="1417.300" y="647.500" textLength="32" lengthAdjust="spacingAndGlyphs">24/05</text>
<text class="ax" x="1614.700" y="647.500" textLength="32" lengthAdjust="spacingAndGlyphs">25/05</text>
<text class="ax" x="1762.300" y="647.500" textLength="32" lengthAdjust="spacingAndGlyphs">27/05</text>
<text class="ax" x="1811.300" y="647.500" textLength="32" lengthAdjust="spacingAndGlyphs">28/05</text>
<path class="c" d="M1849.500 672V1014" stroke="#6c6c6c" stroke-width="5" stroke-dasharray="1 7.270"/>
<path d="M1837 730.500h14M1837 813.500h14M1837 895.500h14M1837 978.500h14" stroke="#707070"/>
<text class="ax" x="1854.300" y="735.500" textLength="38.400" lengthAdjust="spacingAndGlyphs">1.1800</text>
<text class="ax" x="1854.300" y="818.500" textLength="38.400" lengthAdjust="spacingAndGlyphs">1.1750</text>
<text class="ax" x="1854.300" y="900.500" textLength="38.400" lengthAdjust="spacingAndGlyphs">1.1700</text>
<text class="ax" x="1854.300" y="983.500" textLength="38.400" lengthAdjust="spacingAndGlyphs">1.1650</text>
<path class="c" d="M1004.700 1012H1851" stroke="#6e6e6e" stroke-width="5" stroke-dasharray="1 13.375"/>
<path d="M1105.500 1002v12M1220.500 1002v12M1335.500 1002v12M1450.500 1002v12M1565.500 1002v12M1680.500 1002v12M1795.500 1002v12" stroke="#777"/>
<text class="ax" x="996.700" y="1032.500" textLength="102.300" lengthAdjust="spacingAndGlyphs">21/05/2018 17:00</text>
<text class="ax" x="1203" y="1032.500" textLength="32.500" lengthAdjust="spacingAndGlyphs">21:00</text>
<text class="ax" x="1299.500" y="1032.500" textLength="69" lengthAdjust="spacingAndGlyphs">23/05 11:00</text>
<text class="ax" x="1414.500" y="1032.500" textLength="69" lengthAdjust="spacingAndGlyphs">24/05 01:00</text>
<text class="ax" x="1548.800" y="1032.500" textLength="32.500" lengthAdjust="spacingAndGlyphs">15:00</text>
<text class="ax" x="1644.500" y="1032.500" textLength="69" lengthAdjust="spacingAndGlyphs">25/05 05:00</text>
<text class="ax" x="1759.500" y="1032.500" textLength="69" lengthAdjust="spacingAndGlyphs">27/05 19:00</text>
<path d="M999 677v-6l4.500-5 4.500 5v6z" fill="#0a400a"/>
<path d="M996 770.500H1830" stroke="#8a0000" stroke-dasharray="12 12"/>

<g transform="translate(990 630) scale(.33333)">
<path class="c" stroke="#00aa00" stroke-width="3" d="M248 156V519M298 171V270M445 342V456M593 390V423M643 357V411M741 465V549M988 705V873M1086 750V918M1185 768V822M1234 732V792M1333 732V807M1381 696V831M1431 573V732"/>
<path class="c" stroke="#00aa00" stroke-width="35" d="M248 261V495M298 252V264M445 378V441M593 390V414M643 390V393M741 471V531M988 780V798M1086 810V834M1185 774V822M1234 762V777M1333 753V771M1381 711V756M1431 609V714"/>
<path class="c" stroke="#aa0000" stroke-width="3" d="M50 318V348M99 400V412M150 399V432M199 351V504M346 189V420M396 336V456M495 378V447M544 381V417M691 366V537M790 462V543M840 474V804M889 564V741M939 729V837M1037 750V849M1135 765V831M1283 738V843"/>
<path class="c" stroke="#aa0000" stroke-width="35" d="M50 324V348M99 408V412M150 399V432M199 429V495M346 252V399M396 399V441M495 378V411M544 408V414M691 390V531M790 471V477M840 474V657M889 654V732M939 729V798M1037 780V834M1135 810V822M1283 762V771"/>
<polyline class="l" stroke="#00ff00" points="18,304 75,304 140,313 190,320 225,316 320,316 370,320 470,327 620,337 700,345 790,355 880,375 950,400 1040,428 1150,462 1290,495 1380,512 1440,515"/>
<polyline class="l" stroke="#ffff00" points="18,415 60,413 160,413 190,418 230,408 290,395 370,397 500,400 650,398 680,410 780,416 880,455 980,505 1060,540 1150,580 1300,625 1380,635 1440,632"/>
<polyline class="l" stroke="#ff0000" points="18,422 45,415 100,415 160,415 200,428 240,400 300,362 330,367 395,385 460,385 550,395 640,395 670,420 720,432 790,442 860,510 940,605 990,640 1040,685 1140,737 1200,747 1280,755 1340,755 1400,730 1440,715"/>
</g>
<g transform="translate(1440 630) scale(.33333)">
<path class="c" stroke="#00aa00" stroke-width="3" d="M180 615V771M279 633V696M426 684V705M574 738V768M673 660V876M919 921V1023M870 948V1035"/>
<path class="c" stroke="#00aa00" stroke-width="35" d="M180 666V702M279 639V681M426 690V705M574 754V758M673 663V789M870 990V1023M919 951V993"/>
<path class="c" stroke="#aa0000" stroke-width="3" d="M130 576V717M229 552V726M328 582V675M376 660V711M475 672V723M525 702V774M623 747V804M721 633V777M771 753V987M820 900V1062M969 951V1068M1018 846V915"/>
<path class="c" stroke="#aa0000" stroke-width="35" d="M130 609V702M229 666V681M328 639V666M376 663V705M475 690V711M525 708V759M623 753V789M721 663V756M771 753V918M820 915V1023M969 951V1059M1018 870V882"/>
<polyline class="l" stroke="#00ff00" points="0,505 80,515 200,530 320,543 450,558 600,580 720,595 800,612 900,642 965,665 1017,674"/>
<polyline class="l" stroke="#ffff00" points="0,632 100,633 200,642 320,645 450,655 620,679 710,684 790,708 870,748 930,768 965,786 1017,793"/>
<polyline class="l" stroke="#ff0000" points="0,752 30,745 80,716 130,712 200,700 320,678 450,688 560,715 620,733 680,718 720,726 790,790 860,858 920,885 965,922 1017,912"/>
</g>
<path d="M1005 763v7" stroke="#aa2020"/><circle cx="1005" cy="770" r="1.600" fill="none" stroke="#c02020"/>
<use href="#stopb" x="1005" y="744"/>
<text x="1020" y="757.500" style="fill:#fff" textLength="26" lengthAdjust="spacingAndGlyphs">Stop</text>
<rect x="1851.500" y="915" width="48.500" height="16" fill="#4da6ff"/>
<text x="1853.500" y="927.500" style="fill:#07203a" textLength="44.500" lengthAdjust="spacingAndGlyphs">1.16836</text>
</svg>
</body></html>
